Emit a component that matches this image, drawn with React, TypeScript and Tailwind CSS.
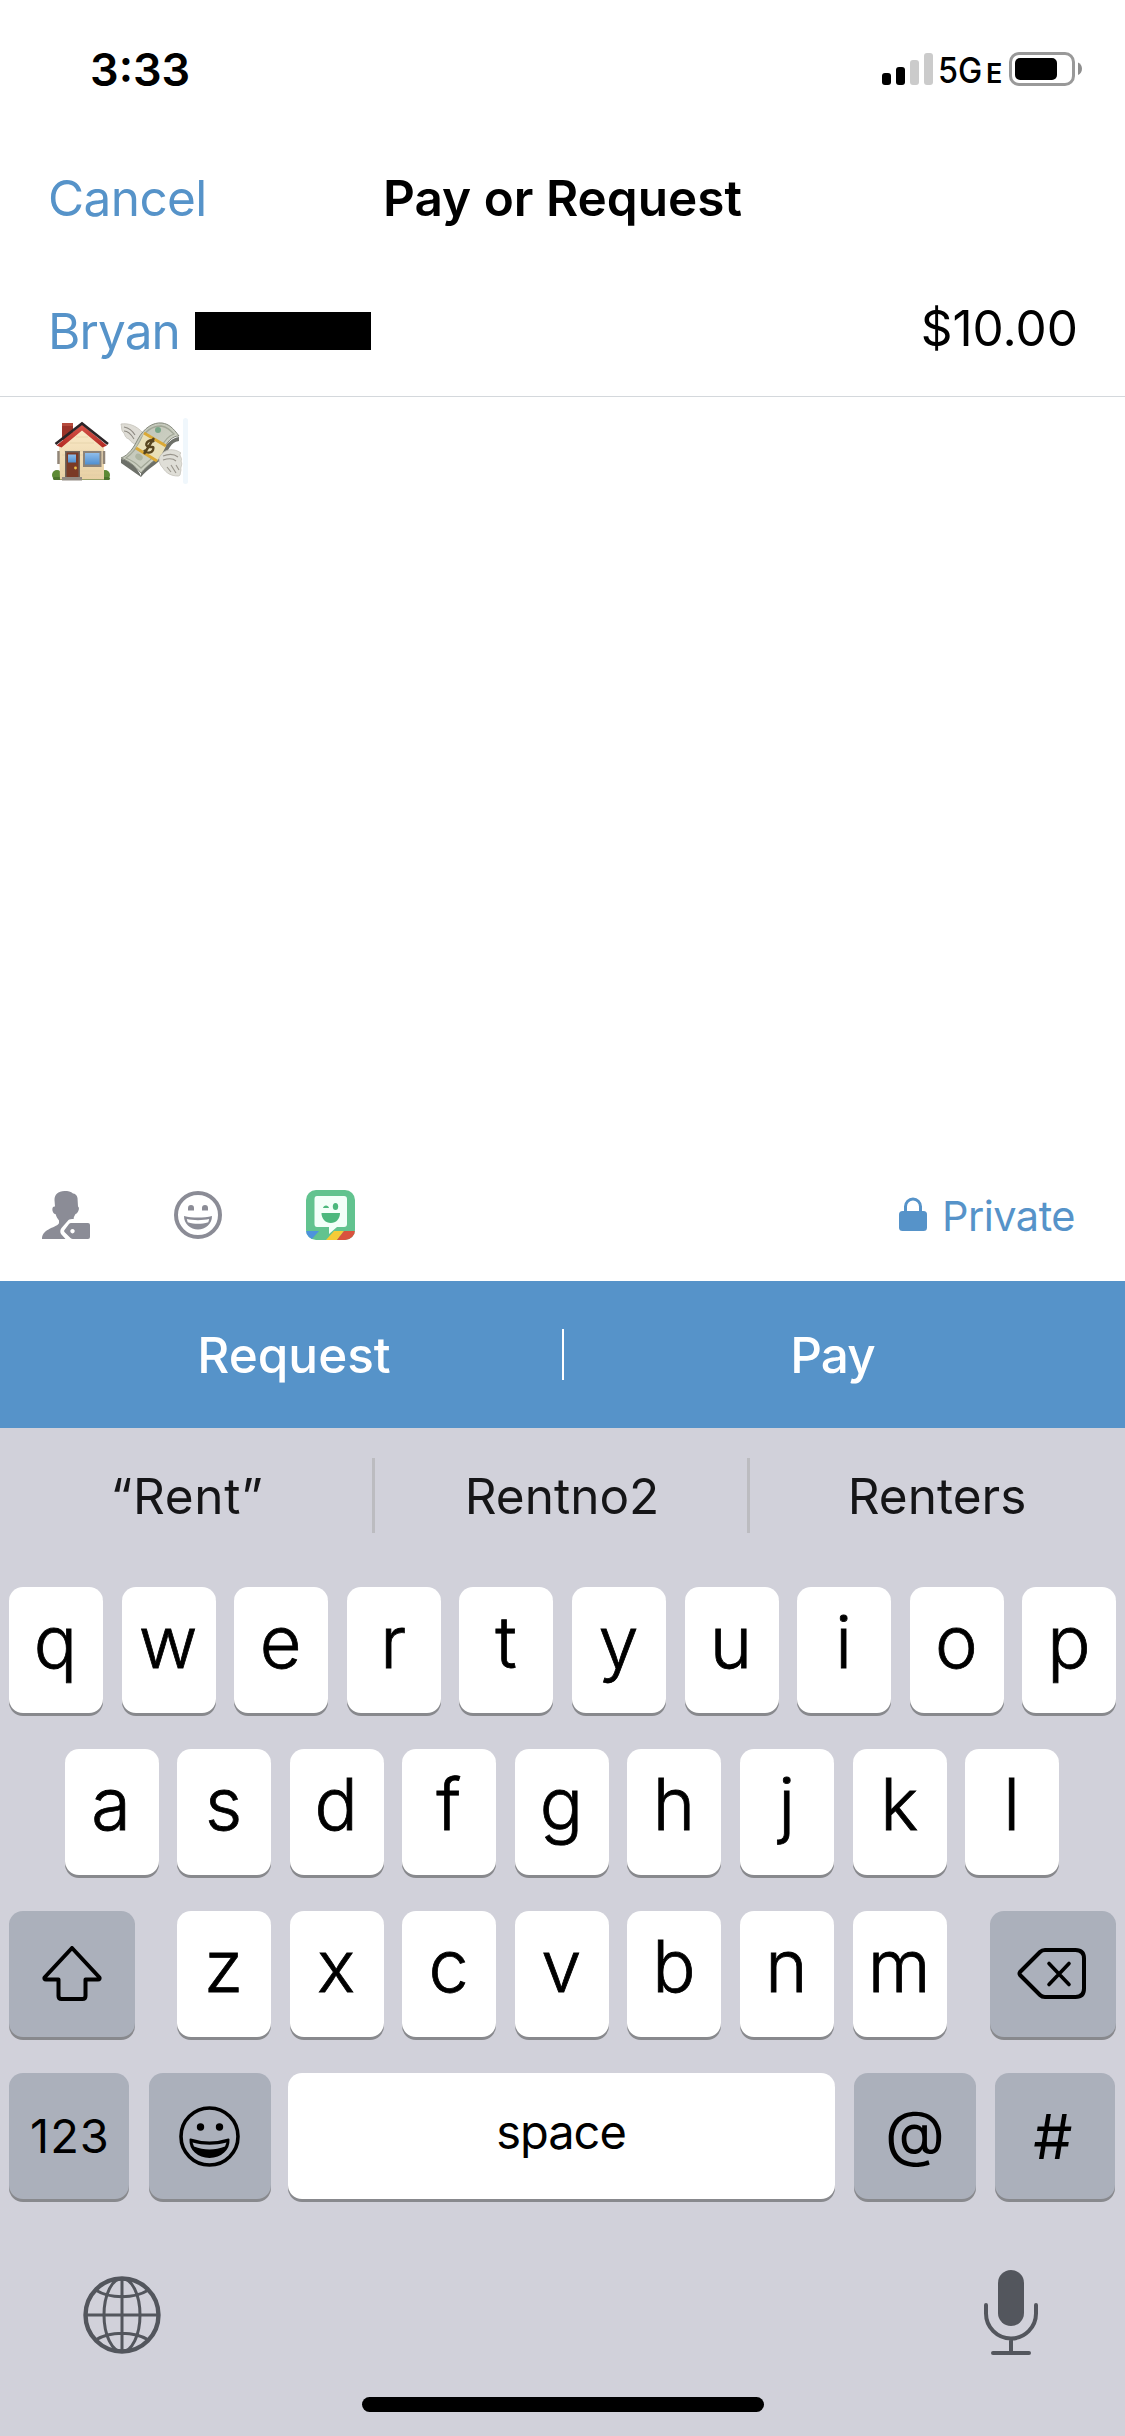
import React from "react";

function StatusBar() {
  return (
    <div className="flex h-[138px] items-center justify-between pl-[90px] pr-[43px]">
      <span className="text-[45px] font-semibold leading-none">3:33</span>
      <div className="flex items-center">
        <div className="flex items-end gap-[5px]">
          <div className="h-3 w-[9px] rounded-[3px] bg-black" />
          <div className="h-[18px] w-[9px] rounded-[3px] bg-black" />
          <div className="h-[25px] w-[9px] rounded-[3px] bg-[#cbcbcb]" />
          <div className="h-8 w-[9px] rounded-[3px] bg-[#cbcbcb]" />
        </div>
        <div className="flex w-[76px] items-baseline pl-[5px] pt-[2px] leading-none">
          <span className="w-[48px] origin-left scale-x-[.9] text-[36px] font-medium">5G</span>
          <span className="text-[27px] font-semibold">E</span>
        </div>
        <svg width="73" height="34" viewBox="0 0 73 34" fill="none">
          <rect x="1.5" y="1.5" width="63" height="31" rx="8.5" stroke="#999" strokeWidth="3" />
          <rect x="6" y="6" width="42" height="22" rx="5" fill="#000" />
          <path d="M69 10.500C74.300 12.500 74.300 21 69 23Z" fill="#8e8e8e" />
        </svg>
      </div>
    </div>
  );
}

function HouseEmoji() {
  return (
    <svg width="60" height="60" viewBox="0 0 60 60">
      <defs>
        <linearGradient id="wall" x1="0" y1="0" x2="0" y2="1">
          <stop offset="0" stopColor="#fbeccb" />
          <stop offset="1" stopColor="#e8d0a4" />
        </linearGradient>
        <linearGradient id="roof" x1="0" y1="0" x2="0" y2="1">
          <stop offset="0" stopColor="#d9554b" />
          <stop offset="1" stopColor="#b32b24" />
        </linearGradient>
        <linearGradient id="glass" x1="0" y1="0" x2="0" y2="1">
          <stop offset="0" stopColor="#8fbdea" />
          <stop offset="1" stopColor="#4f8fd0" />
        </linearGradient>
      </defs>
      <rect x="10" y="2" width="11" height="17" fill="#9c3329" />
      <rect x="10" y="2" width="11" height="3" fill="#b54a3c" />
      <circle cx="5" cy="54" r="5" fill="#5d8a35" />
      <circle cx="53" cy="54" r="5" fill="#5d8a35" />
      <rect x="1" y="56" width="57" height="3" rx="1.500" fill="#4c742c" />
      <path d="M7 24 30 4 52 24V58.500H8Z" fill="url(#wall)" />
      <path d="M12 30H48M10 34H50M10 50H50M10 54H50M18 22H42M24 16H36" stroke="#e3cfa6" strokeWidth=".7" />
      <path d="M6.500 30V43M52 30V43" stroke="#918577" strokeWidth="2.500" />
      <path d="M30 3.500 55 24.500 50.500 26.500 30 9.500 9.500 26.500 4.500 24.500Z" fill="url(#roof)" />
      <path d="M3.500 23 30 2.500 56 23" fill="none" stroke="#2c2427" strokeWidth="2.600" />
      <rect x="13" y="30" width="15" height="27" fill="#6f665d" />
      <rect x="14.500" y="31.500" width="12" height="25" fill="#7a3a26" />
      <rect x="16" y="33.500" width="8" height="8" fill="url(#glass)" />
      <circle cx="23.500" cy="47" r="1.400" fill="#ecc04a" />
      <rect x="31" y="30" width="18.500" height="16" fill="#8c8378" />
      <rect x="33" y="32" width="14.500" height="11.500" fill="url(#glass)" />
      <rect x="10" y="56" width="20" height="3.500" fill="#938b83" />
    </svg>
  );
}

function MoneyEmoji() {
  return (
    <svg width="64" height="60" viewBox="0 0 64 60">
      <defs>
        <linearGradient id="bill" x1="0" y1="0" x2="1" y2="1">
          <stop offset="0" stopColor="#bcc0b3" />
          <stop offset="1" stopColor="#d6d9cb" />
        </linearGradient>
      </defs>
      <path d="M1 2C8 1 16 3 23 11L20 17C17 19 19 22 16 23C13 21 11 20 9 17C5 16 5 13 4 11C1 9 2 6 1 2Z" fill="#dedcd5" stroke="#c3c0b7" strokeWidth=".8" />
      <path d="M4 5C9 6 12 8 15 13M4 9C8 9 11 12 14 17" fill="none" stroke="#8e8a82" strokeWidth="1.100" />
      <path d="M1 37C11 37 18 48 21 54L21 50C28 42 38 37 42 29C47 21 52 16 59 15V19C50 20 49 29 44 34C37 43 28 46 21 55L1 41Z" fill="#6d7069" />
      <path d="M1 36C9 33 14 25 18 17C24 6 33 0 42 1C49 2 53 6 59 14C52 14 47 20 43 28C37 38 28 42 21 51C15 44 9 39 1 36Z" fill="url(#bill)" stroke="#85897c" />
      <path d="M6 36C12 32 17 25 20 19C25 9 33 4 41 4C47 5 50 8 54 12C47 14 43 21 40 27C34 36 27 40 21 46C16 41 11 38 6 36Z" fill="none" stroke="#a2a797" strokeWidth="1.300" />
      <circle cx="38" cy="8" r="3" fill="#79a688" />
      <ellipse cx="19" cy="35" rx="4" ry="3" fill="#aeb5a2" transform="rotate(35 19 35)" />
      <path d="M24 11 46 24C43 30 41 34 37 39L16 26C20 21 22 16 24 11Z" fill="#e9e0b8" />
      <path d="M24 11 46 24M16 26 37 39" stroke="#dba935" strokeWidth="3" />
      <path d="M34 20C31 16 24 21 27 24C30 27 35 22 33 28C31 32 26 31 24 28M34 16 24 32" fill="none" stroke="#57451f" strokeWidth="2.400" />
      <path d="M39 36C44 26 54 26 61 31C58 33 63 36 61 39C63 43 60 45 61 48C60 51 61 54 58 54C51 54 46 51 43 46C40 43 39 40 39 36Z" fill="#dfded7" stroke="#c3c0b7" strokeWidth=".8" />
      <path d="M43 34C48 32 53 31 58 35M43 38C49 36 54 37 56 39M47 45 51 50M51 43 56 51M56 43 59 48" fill="none" stroke="#98948b" strokeWidth="1.100" />
    </svg>
  );
}

function PersonTagIcon() {
  return (
    <svg width="48" height="48" viewBox="0 0 48 48" fill="#8b8c96">
      <path d="M22.500 0C16 0 12.500 3.500 12.500 9L13 15.500C10 15 10 19 11 21C11.500 22.500 12.500 23 13.500 23C14.500 26 15.500 27.500 17 29.500V32C16 36.500 0 37 0 48H23.500L19 43C18 41 18 39 19.500 37L26.500 29C27.500 28 29 28 32 28C31 27.500 32.500 25 33.500 23C35.500 23 38.500 17 36 15.500L35.500 7C35 4 33 2.500 31 2.500C29 .5 26 0 22.500 0Z" />
      <path fillRule="evenodd" d="M29 32H46Q48 32 48 34V46Q48 48 46 48H31Q29.500 48 28.500 47L22.500 41Q21.500 40 22.500 39L27 33Q27.800 32 29 32ZM30.500 38A2.200 2.200 0 1 0 30.510 38Z" />
    </svg>
  );
}

function SmileIcon() {
  return (
    <svg width="48" height="48" viewBox="0 0 48 48">
      <circle cx="24" cy="24" r="22" fill="none" stroke="#8b8c96" strokeWidth="4" />
      <path d="M14 19.500V17A3 3 0 0 1 20 17V19.500ZM28 19.500V17A3 3 0 0 1 34 17V19.500Z" fill="#8b8c96" />
      <path d="M10 25C18 27 30 27 38 25C38 33 31.500 38.500 24 38.500S10 33 10 25Z" fill="#8b8c96" />
      <path d="M12.800 28C19 29.500 29 29.500 35.200 28L34.300 31.200C27 33.400 21 33.400 13.700 31.200Z" fill="#fff" />
    </svg>
  );
}

function BitmojiIcon() {
  return (
    <svg width="50" height="50" viewBox="0 0 50 50">
      <defs>
        <clipPath id="tile">
          <rect width="49" height="50" rx="10" />
        </clipPath>
      </defs>
      <g clipPath="url(#tile)">
        <rect width="50" height="50" fill="#62c38f" />
        <path d="M0 41H13L5 50H0Z" fill="#4d93dd" />
        <path d="M28 41H38L31 50H20Z" fill="#f5cb37" />
        <path d="M38 41H50V50H31Z" fill="#d9523d" />
      </g>
      <path d="M11 6H38Q41 6 41 9V34Q41 37 38 37H31L23 44V37H11Q8.500 37 8.500 34V9Q8.500 6 11 6Z" fill="#f3fff9" />
      <path d="M15.500 23H34C34 29 30 33 24.800 33S15.500 29 15.500 23Z" fill="#4bb87d" />
      <path d="M17 18C17.500 14.500 22.500 14.500 23 18Z" fill="#4bb87d" />
      <ellipse cx="29.500" cy="16.500" rx="2.700" ry="3.600" fill="#4bb87d" />
    </svg>
  );
}

function LockIcon() {
  return (
    <svg width="28" height="34" viewBox="0 0 28 34">
      <rect x="0" y="14" width="28" height="20" rx="3.500" fill="#5693c9" />
      <path d="M6.500 15V9.500A7.500 7.500 0 0 1 21.500 9.500V15" fill="none" stroke="#5693c9" strokeWidth="3" />
    </svg>
  );
}

function ShiftIcon() {
  return (
    <svg width="60" height="58" viewBox="0 0 60 58" fill="none" stroke="#000" strokeWidth="4" strokeLinejoin="round">
      <path d="M30 2 57.500 31.500Q58 33.500 56 33.500H43.500V50Q43.500 53 40.500 53H19.500Q16.500 53 16.500 50V33.500H4Q2 33.500 2.500 31.500Z" />
    </svg>
  );
}

function DeleteIcon() {
  return (
    <svg width="70" height="54" viewBox="0 0 70 54" fill="none" stroke="#000" strokeWidth="4" strokeLinecap="round" strokeLinejoin="round">
      <path d="M28 3H58.500Q67 3 67 11.500V41.500Q67 50 58.500 50H28Q25 50 23 48L3 28Q2 26.500 3 25L23 5Q25 3 28 3Z" />
      <path d="M32 16.500 52 37.500M52 16.500 32 37.500" strokeWidth="3.600" />
    </svg>
  );
}

function EmojiKeyIcon() {
  return (
    <svg width="61" height="61" viewBox="0 0 61 61">
      <circle cx="30.500" cy="30.500" r="28.500" fill="none" stroke="#000" strokeWidth="3.600" />
      <circle cx="21.500" cy="21" r="3.700" />
      <circle cx="40.500" cy="21" r="3.700" />
      <path d="M11.500 33.500C24 37.500 37 37.500 49.500 33.500C50 43 42 51 30.500 51S11 43 11.500 33.500Z" stroke="#000" strokeWidth="2" strokeLinejoin="round" />
      <path d="M13.500 36.500C25 39.500 36 39.500 47.500 36.500L46 40.500C36 44.500 25 44.500 15 40.500Z" fill="#abb0bb" />
    </svg>
  );
}

function GlobeIcon() {
  return (
    <svg width="78" height="78" viewBox="0 0 78 78" fill="none" stroke="#53565d" strokeWidth="3">
      <circle cx="39" cy="39" r="36.500" strokeWidth="4.400" />
      <ellipse cx="39" cy="39" rx="18" ry="36.500" />
      <path d="M39 2V76M2 39H76M12.500 14C27 23 51 23 65.500 14M12.500 64C27 55 51 55 65.500 64" />
    </svg>
  );
}

function MicIcon() {
  return (
    <svg width="56" height="86" viewBox="0 0 56 86" fill="none" stroke="#53565d" strokeWidth="4" strokeLinecap="round">
      <rect x="15" y="0" width="26" height="56" rx="13" fill="#53565d" stroke="none" />
      <path d="M3 35V43.500A25 25 0 0 0 53 43.500V35M28 68.500V83M10 83H46" />
    </svg>
  );
}

const KEY = "flex h-[126px] shrink-0 items-center justify-center rounded-[14px] shadow-[0_3px_0_#88898d]";

function LetterKeys({ letters }: { letters: string }) {
  return (
    <div className="flex gap-[18.6px]">
      {letters.split("").map((letter) => (
        <div
          key={letter}
          className={`${KEY} w-[94px] bg-white pb-[17px] pr-px text-[72px] font-light leading-none [-webkit-text-stroke:0.8px_#000]`}
        >
          {letter}
        </div>
      ))}
    </div>
  );
}

function Keyboard() {
  return (
    <div className="flex h-[1008px] flex-col bg-[#d1d1da]">
      <div className="flex h-[135px] items-center text-[49.5px] leading-none text-[#151517]">
        <div className="w-[372px] pl-0.5 pt-[3px] text-center tracking-[0.7px]">“Rent”</div>
        <div className="h-[75px] w-[3px] bg-[#bcbcc0]" />
        <div className="w-[372px] pl-0.5 pt-[3px] text-center">Rentno2</div>
        <div className="h-[75px] w-[3px] bg-[#bcbcc0]" />
        <div className="flex-1 pr-px pt-[3px] text-center">Renters</div>
      </div>
      <div className="flex flex-col gap-9 px-[9px] pt-6">
        <LetterKeys letters="qwertyuiop" />
        <div className="flex pl-[55.5px]">
          <LetterKeys letters="asdfghjkl" />
        </div>
        <div className="flex">
          <div className={`${KEY} mr-[42px] w-[126px] bg-[#abb0bb] pt-0.5`}>
            <ShiftIcon />
          </div>
          <LetterKeys letters="zxcvbnm" />
          <div className={`${KEY} ml-auto w-[126px] bg-[#abb0bb] pr-0.5`}>
            <DeleteIcon />
          </div>
        </div>
        <div className="flex">
          <div className={`${KEY} w-[120px] bg-[#abb0bb] pl-0.5 text-[47px] tracking-[1px]`}>123</div>
          <div className={`${KEY} ml-5 w-[122px] bg-[#abb0bb] pr-0.5`}>
            <EmojiKeyIcon />
          </div>
          <div className={`${KEY} ml-[17px] w-[547px] bg-white pb-[7px] pr-px text-[47px] tracking-[-1px]`}>space</div>
          <div className={`${KEY} ml-[19px] w-[122px] bg-[#abb0bb] pb-2 text-[62px]`}>@</div>
          <div className={`${KEY} ml-[19px] w-[120px] bg-[#abb0bb] pr-1 text-[62px]`}>#</div>
        </div>
      </div>
      <div className="flex items-start justify-between pl-[83px] pr-[86px] pt-[71px]">
        <div className="pt-1.5">
          <GlobeIcon />
        </div>
        <MicIcon />
      </div>
      <div className="mx-auto mb-6 mt-auto h-[15px] w-[402px] rounded-full bg-black" />
    </div>
  );
}

export default function App() {
  return (
    <div className="flex h-[2436px] w-[1125px] flex-col overflow-hidden bg-white font-['Inter',sans-serif] text-black">
      <StatusBar />
      <div className="grid h-[120px] grid-cols-[1fr_auto_1fr] items-center px-12 pt-px text-[49.5px] leading-none">
        <span className="tracking-[-0.6px] text-[#5693c9]">Cancel</span>
        <span className="font-semibold">Pay or Request</span>
      </div>
      <div className="flex h-[139px] items-center justify-between border-b border-[#d4d8dc] px-12 text-[49.5px] leading-none">
        <div className="flex items-center pt-2">
          <span className="w-[147px] pt-[2px] tracking-[-0.9px] text-[#5693c9]">Bryan</span>
          <div className="h-[38px] w-44 bg-black" />
        </div>
        <span className="-mr-px pt-1">$10.00</span>
      </div>
      <div className="flex flex-1 items-start pl-[52px] pt-[21px]">
        <div className="mt-[3px]">
          <HouseEmoji />
        </div>
        <div className="ml-[8px] mt-[4px]">
          <MoneyEmoji />
        </div>
        <div className="-ml-px h-[66px] w-[5px] rounded-sm bg-[#f0f7fc]" />
      </div>
      <div className="flex h-[132px] items-center justify-between pl-[42px] pr-[50px]">
        <div className="flex items-center gap-[84px]">
          <PersonTagIcon />
          <SmileIcon />
          <BitmojiIcon />
        </div>
        <div className="flex items-center text-[41.5px] leading-none tracking-[-0.5px] text-[#5693c9]">
          <div className="pb-[3px]">
            <LockIcon />
          </div>
          <span className="ml-[15px] pt-[3px]">Private</span>
        </div>
      </div>
      <div className="flex h-[147px] items-center bg-[#5693c9] text-[49.5px] font-medium leading-none text-white">
        <div className="w-[562px] pl-[26px] pt-[3px] text-center">Request</div>
        <div className="h-[51px] w-[2px] bg-white" />
        <div className="flex-1 pr-6 pt-[3px] text-center tracking-[-1px]">Pay</div>
      </div>
      <Keyboard />
    </div>
  );
}
